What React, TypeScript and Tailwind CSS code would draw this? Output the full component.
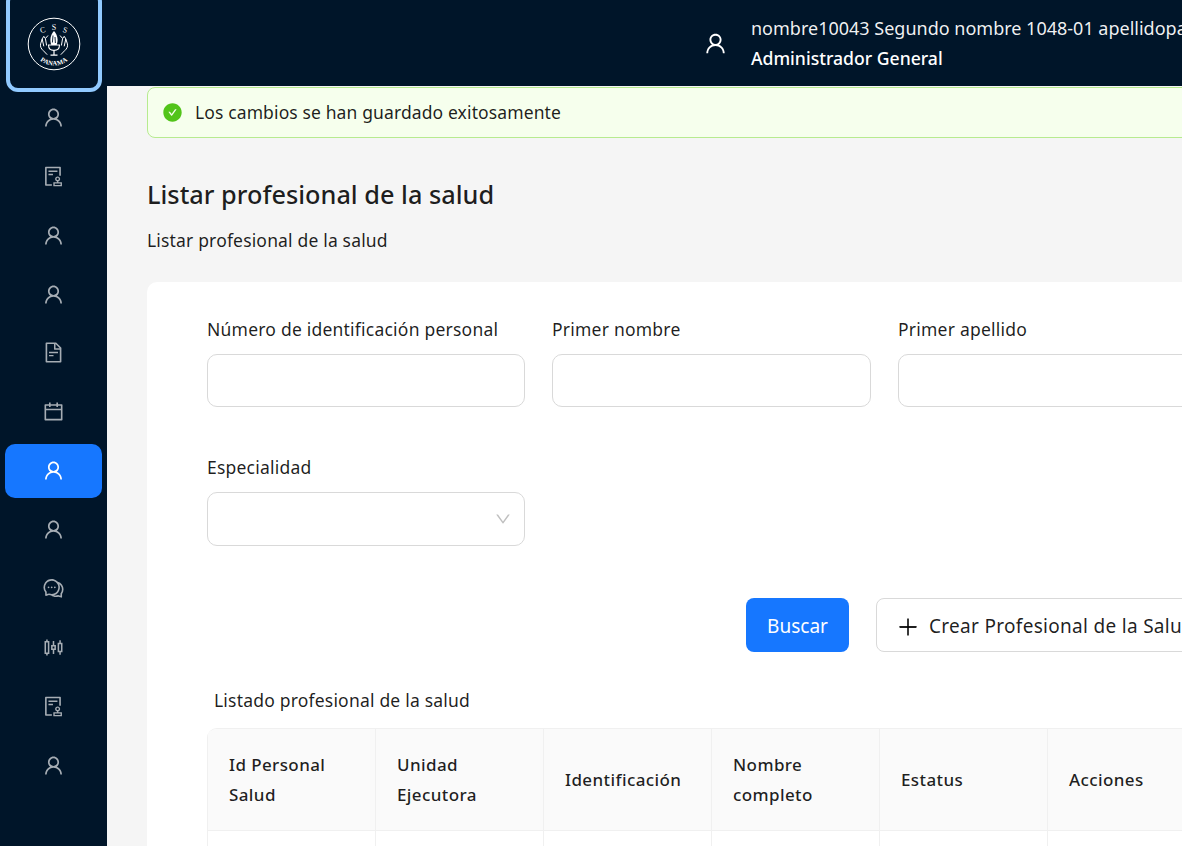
import React from "react";
import {
  AiOutlineUser,
  AiOutlineAudit,
  AiOutlineFileText,
  AiOutlineCalendar,
  AiOutlineComment,
  AiOutlineSliders,
  AiFillCheckCircle,
  AiOutlinePlus,
  AiOutlineDown,
} from "react-icons/ai";

const menu = [
  { icon: AiOutlineUser },
  { icon: AiOutlineAudit },
  { icon: AiOutlineUser },
  { icon: AiOutlineUser },
  { icon: AiOutlineFileText },
  { icon: AiOutlineCalendar },
  { icon: AiOutlineUser, active: true },
  { icon: AiOutlineUser },
  { icon: AiOutlineComment },
  { icon: AiOutlineSliders },
  { icon: AiOutlineAudit },
  { icon: AiOutlineUser },
];

const columns = [
  ["Id Personal", "Salud"],
  ["Unidad", "Ejecutora"],
  ["Identificación"],
  ["Nombre", "completo"],
  ["Estatus"],
  ["Acciones"],
];

function Logo() {
  return (
    <svg width="54" height="54" viewBox="0 0 54 54" fill="none">
      <circle cx="27" cy="27" r="25.8" stroke="#fff" strokeWidth="1" />
      <defs>
        <path id="logoBottom" d="M5.5 27 A21.5 21.5 0 0 0 48.5 27" />
      </defs>
      <g fill="#fff" fontSize="8" fontFamily="Liberation Serif, serif" textAnchor="middle">
        <text x="16.5" y="15.5" transform="rotate(-18 16.5 15.5)">C</text>
        <text x="27" y="13">S</text>
        <text x="37.5" y="15.5" transform="rotate(18 37.5 15.5)">S</text>
      </g>
      <text fill="#fff" fontSize="6.6" fontWeight="700" fontFamily="Liberation Serif, serif">
        <textPath href="#logoBottom" startOffset="50%" textAnchor="middle" letterSpacing="0.2">
          PANAMA
        </textPath>
      </text>
      {/* figura central y copa */}
      <path d="M27 14c1.6 1.6 3.6 5 3.6 8.4 0 2.4-.4 4-1 5.6h-5.2c-.6-1.6-1-3.2-1-5.6 0-3.4 2-6.8 3.6-8.4z" fill="#fff" />
      <path d="M26 18.5l-.6 7M28 20l.4 6" stroke="#001529" strokeWidth="0.9" />
      <path d="M21.5 28h11c0 3.4-2.4 5.4-5.5 5.4s-5.5-2-5.5-5.4z" stroke="#fff" strokeWidth="1.1" />
      <path d="M27 33.4v4.4M23.5 38.2h7" stroke="#fff" strokeWidth="1.2" />
      {/* manos */}
      <path d="M21 18.5l-2.6 3-1.6-2.2-1.6 2.6-1.6 5c-.6 2.6.6 5 2.6 6.6l4 4.2M18.4 21.5l1.2 7M15.2 21.9l1.6 7.4" stroke="#fff" strokeWidth="1" strokeLinejoin="round" />
      <path d="M33 18.5l2.6 3 1.6-2.2 1.6 2.6 1.6 5c.6 2.6-.6 5-2.6 6.6l-4 4.2M35.6 21.5l-1.2 7M38.8 21.9l-1.6 7.4" stroke="#fff" strokeWidth="1" strokeLinejoin="round" />
    </svg>
  );
}

function Field({ label, select }: { label: string; select?: boolean }) {
  return (
    <div className="flex flex-col">
      <label className="h-[24px] mb-[13px] leading-[24px] text-[17.5px] text-[#000000e0] tracking-[0.22px]">{label}</label>
      <div className={`relative rounded-[10px] border border-[#d9d9d9] bg-white ${select ? "h-[54px]" : "h-[53px]"}`}>
        {select && <AiOutlineDown className="absolute right-[12px] top-[17px] text-[18px] text-[#00000040]" />}
      </div>
    </div>
  );
}

export default function App() {
  return (
    <div className="flex h-[846px] w-[1182px] overflow-hidden bg-[#f5f5f5] font-['Noto_Sans',sans-serif]">
      {/* Sidebar */}
      <aside className="w-[107px] shrink-0 bg-[#001529] flex flex-col items-center">
        <div className="relative z-10 mt-[-10px] mb-[-3.5px] h-[102px] w-[96px] shrink-0 rounded-[12px] border-[4px] border-[#91caff] flex items-center justify-center pt-[5px]">
          <Logo />
        </div>
        {menu.map((item, i) => {
          const Icon = item.icon;
          return (
            <div
              key={i}
              className={`my-[2.45px] h-[54px] w-[97px] shrink-0 rounded-[10px] flex items-center justify-center pb-[1px] ${
                item.active ? "bg-[#1677ff] text-white" : "text-[#ffffffa6]"
              }`}
            >
              <Icon className="text-[23px]" />
            </div>
          );
        })}
      </aside>

      <div className="flex-1 min-w-0 flex flex-col">
        {/* Header */}
        <header className="h-[86px] shrink-0 bg-[#001529] flex items-center pl-[596px] text-white whitespace-nowrap">
          <AiOutlineUser className="shrink-0 text-[25px] mr-[23px]" />
          <div className="flex flex-col shrink-0">
            <span className="text-[18px] leading-[29px] text-[#fffffff0]">
              nombre10043 Segundo nombre 1048-01 apellidopaterno
            </span>
            <span className="pt-[1px] text-[17.6px] leading-[29px] font-medium">Administrador General</span>
          </div>
        </header>

        <main className="w-[1200px] pl-[40px] pt-[1px] text-[#000000e0]">
          {/* Alert */}
          <div className="h-[51px] w-[1200px] rounded-[8px] border border-[#b7eb8f] bg-[#f6ffed] flex items-center pl-[14px] gap-[12px]">
            <AiFillCheckCircle className="text-[#52c41a] text-[21px]" />
            <span className="text-[17.5px] tracking-[0.12px]">Los cambios se han guardado exitosamente</span>
          </div>

          <h1 className="mt-[38px] text-[25.3px] leading-[36px] font-medium text-[#000000e0]">Listar profesional de la salud</h1>
          <p className="mt-[16px] text-[17.5px] leading-[24px] tracking-[0.17px]">Listar profesional de la salud</p>

          {/* Card */}
          <section className="mt-[30px] w-[1200px] rounded-[10px] bg-white pl-[60px] pt-[35px] pb-[40px]">
            <div className="grid grid-cols-[318px_319px_319px] gap-x-[27px] gap-y-[48px] w-[1100px]">
              <Field label="Número de identificación personal" />
              <Field label="Primer nombre" />
              <Field label="Primer apellido" />
              <Field label="Especialidad" select />
            </div>

            <div className="mt-[52px] ml-[539px] flex gap-[27px] whitespace-nowrap">
              <button className="h-[54px] w-[103px] shrink-0 rounded-[8px] bg-[#1677ff] pt-[3px] text-white text-[19px]">Buscar</button>
              <button className="h-[54px] w-[340px] shrink-0 rounded-[8px] border border-[#d9d9d9] bg-white flex items-center pl-[19px] pt-[3px] gap-[9px] text-[19px] tracking-[0.3px]">
                <AiOutlinePlus className="text-[24px]" />
                Crear Profesional de la Salud
              </button>
            </div>

            <h2 className="mt-[36px] ml-[7px] text-[17.5px] leading-[24px] tracking-[0.2px]">Listado profesional de la salud</h2>

            {/* Table */}
            <div className="mt-[16px] w-[1008px] rounded-t-[10px] border-t border-[#f0f0f0] overflow-hidden">
              <div className="grid grid-cols-[168px_168px_168px_168px_168px_168px] bg-[#fafafa] border-b border-[#f0f0f0]">
                {columns.map((col, i) => (
                  <div key={i} className="h-[101px] flex flex-col justify-center pl-[21px] pr-[10px] border-l border-[#f0f0f0] text-[17px] leading-[30px] font-medium tracking-[0.4px]">
                    {col.map((line) => (
                      <span key={line}>{line}</span>
                    ))}
                  </div>
                ))}
              </div>
              <div className="grid grid-cols-[168px_168px_168px_168px_168px_168px]">
                {columns.map((_, i) => (
                  <div key={i} className="h-[60px] border-l border-[#f0f0f0]" />
                ))}
              </div>
            </div>
          </section>
        </main>
      </div>
    </div>
  );
}
